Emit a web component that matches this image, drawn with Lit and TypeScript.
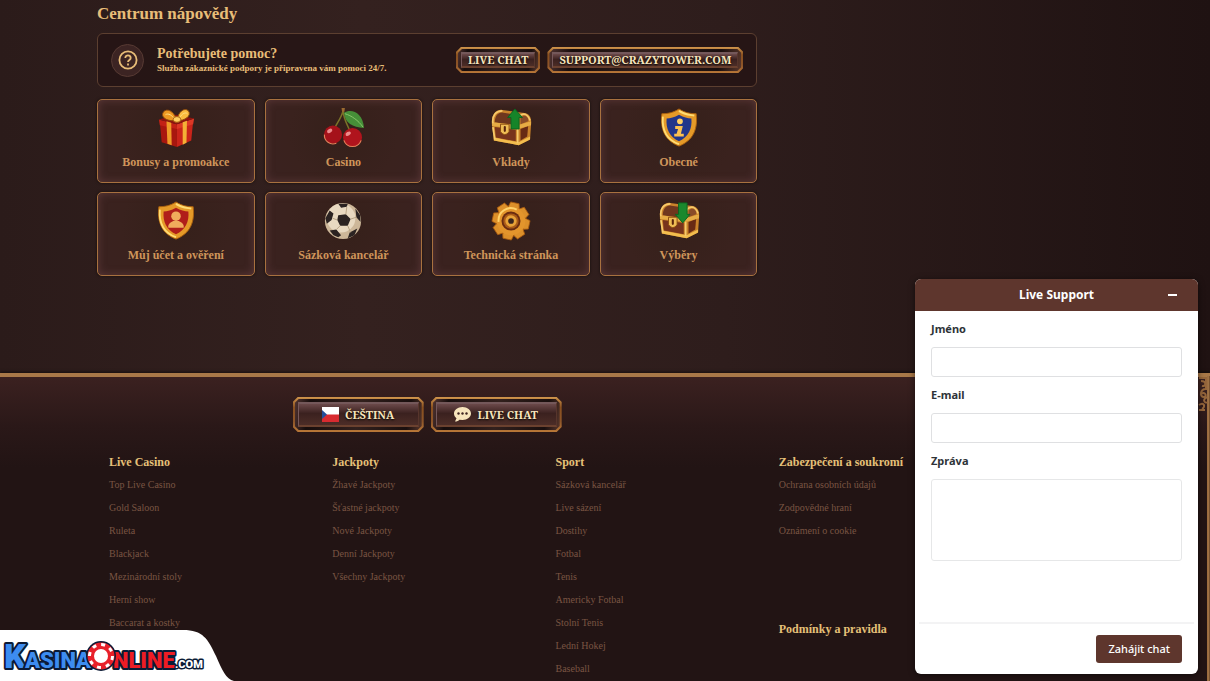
import { LitElement, html, css, svg } from "lit";
import { customElement } from "lit/decorators.js";

const gift = svg`
  <path d="M4 15 L22 20 L22 41 L6 36Z" fill="#a8170f"/><path d="M22 20 L39 14 L37 34 L22 41Z" fill="#c9241a"/>
  <path d="M3 12 L22 17 L22 22 L4 18Z" fill="#c32216"/><path d="M22 17 L40 11 L39 17 L22 22Z" fill="#dc3826"/>
  <path d="M3 12 L21 7 L40 11 L22 17Z" fill="#8f140e"/>
  <path d="M11 14 L16 15.500 L16.500 39 L12 37.500Z" fill="#ee9a28"/><path d="M28 15 L32.500 13.500 L32 36.500 L28 38.500Z" fill="#f4b036"/>
  <path d="M22 13 C10 15 3 8 9 3 C14 0 20 6 22 13Z" fill="#ee9a22" stroke="#8e4a0c"/>
  <path d="M22 13 C23 4 30 -1 34 3 C38 8 30 14 22 13Z" fill="#f9bb3e" stroke="#8e4a0c"/>
  <path d="M10 7 C13 5 17 8 19 11 M25 10 C27 6 31 4 33 6" stroke="#ffdf85" fill="none"/>
  <ellipse cx="22" cy="12" rx="4" ry="3" fill="#ffd061" stroke="#a35c10"/>`;
const cherry = svg`
  <path d="M21 3 C19 12 13 17 11 24 M21 3 C22 13 26 18 29 26" fill="none" stroke="#7c7328" stroke-width="1.600"/>
  <path d="M19.500 0 L23 0 L22.500 4 L20 4Z" fill="#9b6a30"/>
  <path d="M22 5 C30 0 42 5 43 21 C31 20 23 16 22 5Z" fill="#468f38"/><path d="M23 6 C30 8 37 13 42 20" stroke="#8cc76d" fill="none"/>
  <circle cx="10.500" cy="28" r="9.500" fill="#a5121a"/><circle cx="31" cy="31" r="10" fill="#b0141d"/>
  <path d="M1.500 28 A9 9 0 0 0 14 37 M22 34 A9.500 9.500 0 0 0 40 34" stroke="#e0825a" stroke-width="1.200" fill="none"/>
  <ellipse cx="7" cy="24" rx="3" ry="2" fill="#ec8b8c" transform="rotate(-30 7 24)"/><ellipse cx="26.500" cy="27" rx="3" ry="2" fill="#ec8b8c" transform="rotate(-30 26.500 27)"/>`;
const chest = svg`
  <path d="M1 17 C0 6 6 1 12 2 L33 5 C41 5 43 11 42 18 L41 33 L29 39 L3 34Z" fill="#c9822a"/>
  <path d="M4 15 C4 8 8 4 13 5 L28 7 C25 10 25 14 25 18Z" fill="#6f371e"/>
  <path d="M31 10 C35 6 40 9 39 14 L31 17Z" fill="#8a4c28"/>
  <path d="M4 20 L26 23 L26 35 L5 31Z" fill="#78341c"/><path d="M31 22 L39 19 L38 30 L31 34Z" fill="#682a14"/>
  <path d="M1 15 L28 18 L42 14 L42 18 L28 22 L1 19Z" fill="#e6ac45"/>
  <path d="M3 31 L29 36 L41 30 L41 33 L29 39 L3 34Z" fill="#f2bd4e"/>
  <path d="M2 16 C1 8 5 3 12 3 M28 16 C27 5 38 3 41 13 M2 20 L4 33 M28 22 V37" fill="none" stroke="#f6ca6c" stroke-width="1.800"/>
  <path d="M10 17 h9 v8 q-4.500 6 -9 0Z" fill="#f0bd55" stroke="#8a4b10"/><path d="M14.500 20 v4" stroke="#5a250c" stroke-width="2.200" stroke-linecap="round"/>`;
const deposit = svg`${chest}<path d="M25 1 L33 10 H29.500 V22 H21 V10 H17.500Z" fill="#158429" stroke="#0d6420"/>`;
const withdraw = svg`${chest}<path d="M20.500 2 H29.500 V14 H32.500 L25 23 L17 14 H20.500Z" fill="#1a882d" stroke="#0d6420"/>`;
const shieldBody = (fill: string) => svg`
  <path d="M21 1 C27 5 33 6 39 6 C41 22 36 34 21 40 C6 34 1 22 3 6 C9 6 15 5 21 1Z" fill="#e59a28" stroke="#a9600f"/>
  <path d="M21 3 C27 7 32 7 37 8 M4 9 C3 22 7 33 21 38" fill="none" stroke="#ffdd74" stroke-width="2"/>
  <path d="M21 7 C26 10 30 10.500 34 11 C35 22 31 30 21 35 C11 30 7 22 8 11 C12 10.500 16 10 21 7Z" fill="${fill}"/>`;
const info = svg`${shieldBody("#22368a")}<circle cx="22" cy="14" r="3" fill="#ffcf62"/><path d="M17 19 H25 L23 27 H26 V30 H16 V27 H18.500 L20 22 H17Z" fill="#fbc050"/>`;
const account = svg`${shieldBody("#b01e1a")}<circle cx="21" cy="16" r="5" fill="#f0ab5c"/><path d="M13 28 C12 24 16 22 18 21 H24 C26 22 30 24 29 28Z" fill="#f0ab5c"/>`;
const ball = svg`
  <circle cx="21" cy="21" r="19" fill="#cdb799"/><circle cx="19" cy="18" r="15" fill="#e8d9c1"/>
  <path d="M16 15 L24 14 L29 19 L26 26 L18 26 L15 20Z M2.500 18 L7 10 L11 13 L9 20 L4 24Z M16 3 L26 3 L25 6 L19 7Z M34 8 L39 15 L39.500 22 L35 17Z M7 31 L14 30 L19 36 L16 38 L11 36Z M28 33 L36 29 L33 36 L26 39Z" fill="#2b2322"/>
  <path d="M15 20 L10 18 M24 14 L25 6 M29 19 L35 17 M26 26 L29 33 M18 26 L14 30" stroke="#b5a184"/>`;
const teeth = [0, 45, 90, 135, 180, 225, 270, 315];
const gear = svg`
  ${teeth.map((a) => svg`<path d="M14.500 9 L16.500 1.500 H25.500 L27.500 9Z" fill="#dc902a" stroke="#a85a10" stroke-width=".8" transform="rotate(${a + 12} 21 21)"/>`)}
  <circle cx="21" cy="21" r="15" fill="#e3952c"/><path d="M8 22 A13 13 0 0 1 27 9" stroke="#ffd26a" stroke-width="2" fill="none"/>
  <circle cx="21" cy="21" r="10" fill="#6b2c10"/><circle cx="21" cy="21" r="8" fill="#a95a18"/><circle cx="21" cy="21" r="6" fill="#e8a238"/><circle cx="21" cy="21" r="3" fill="#38241e"/>`;

const topics = [
  { label: "Bonusy a promoakce", icon: gift },
  { label: "Casino", icon: cherry },
  { label: "Vklady", icon: deposit },
  { label: "Obecné", icon: info },
  { label: "Můj účet a ověření", icon: account },
  { label: "Sázková kancelář", icon: ball },
  { label: "Technická stránka", icon: gear },
  { label: "Výběry", icon: withdraw },
];

const columns = [
  [{ title: "Live Casino", links: ["Top Live Casino", "Gold Saloon", "Ruleta", "Blackjack", "Mezinárodní stoly", "Herní show", "Baccarat a kostky"] }],
  [{ title: "Jackpoty", links: ["Žhavé Jackpoty", "Šťastné jackpoty", "Nové Jackpoty", "Denní Jackpoty", "Všechny Jackpoty"] }],
  [{ title: "Sport", links: ["Sázková kancelář", "Live sázení", "Dostihy", "Fotbal", "Tenis", "Americky Fotbal", "Stolní Tenis", "Lední Hokej", "Baseball"] }],
  [
    { title: "Zabezpečení a soukromí", links: ["Ochrana osobních údajů", "Zodpovědné hraní", "Oznámení o cookie"] },
    { title: "Podmínky a pravidla", links: [] as string[] },
  ],
];

@customElement("framed-button")
class FramedButton extends LitElement {
  static properties = { large: { type: Boolean, reflect: true } };
  static styles = css`
    :host { display: block; }
    .rim {
      display: block; padding: 2px; border: 0; cursor: pointer;
      background: linear-gradient(#d0954c, #89501f 30%, #8d5529 70%, #b97838);
      clip-path: polygon(5px 0, calc(100% - 5px) 0, 100% 5px, 100% calc(100% - 5px), calc(100% - 5px) 100%, 5px 100%, 0 calc(100% - 5px), 0 5px);
    }
    .well {
      display: block; padding: 3px; background: linear-gradient(100deg, #513431, #170d0c 12%, #32201d 50%, #1a0f0e 88%, #59372c);
      clip-path: polygon(4px 0, calc(100% - 4px) 0, 100% 4px, 100% calc(100% - 4px), calc(100% - 4px) 100%, 4px 100%, 0 calc(100% - 4px), 0 4px);
    }
    .face {
      display: flex; align-items: center; justify-content: center; gap: 6px;
      height: 16px; padding: 0 6px; box-sizing: border-box;
      border-top: 2px solid #74585a; border-left: 1px solid #76585a; border-bottom: 2px solid #6b412f; border-right: 1px solid #57352c;
      background: linear-gradient(#6b494a, #3b211f 45%, #4c2d27);
      color: #f7e5bd; font: 700 11px/12px "Noto Serif", "DejaVu Serif Condensed", "DejaVu Serif", serif;
      text-shadow: 0 1px 2px #000; white-space: nowrap; text-transform: uppercase;
    }
    :host([large]) .face { width: 121px; height: 25px; }
  `;
  render() {
    return html`<button class="rim"><span class="well"><span class="face"><slot></slot></span></span></button>`;
  }
}

@customElement("live-support")
class LiveSupport extends LitElement {
  static styles = css`
    :host { display: block; }
    .panel {
      display: flex; flex-direction: column; height: 395px; overflow: hidden;
      background: #fff; border-radius: 6px; color: #2e3338;
      font: 700 11px/16px "Noto Sans", sans-serif; box-shadow: 0 1px 6px #0008;
    }
    .bar { display: grid; grid-template-columns: 30px 1fr 30px; align-items: center; height: 32px; flex: none; background: #5e362d; color: #fff; }
    .title { grid-column: 2; margin: 0; font-size: 12px; line-height: 18px; text-align: center; }
    .minimise { display: grid; place-items: center start; height: 32px; padding: 0; border: 0; background: none; }
    .form { display: flex; flex-direction: column; flex: 1; padding: 10px 16px 0; }
    .field { display: block; width: 100%; height: 30px; margin: 10px 0; box-sizing: border-box; border: 1px solid #dfe0e2; border-radius: 3px; background: #fff; resize: none; font: inherit; }
    .message { height: 82px; border-color: #e6e7e8; }
    .actions { display: flex; justify-content: flex-end; margin: 0 4px; padding: 11px 12px 11px; border-top: 2px solid #f3f3f4; }
    .send { height: 28px; padding: 0 12px; border: 0; border-radius: 3px; background: #5e362d; color: #fff; font: 500 11px/16px "Noto Sans", sans-serif; }
  `;
  render() {
    return html`<section class="panel">
      <header class="bar">
        <h2 class="title">Live Support</h2>
        <button class="minimise" aria-label="Minimalizovat"><svg width="9" height="2"><rect width="9" height="2" fill="#fff"/></svg></button>
      </header>
      <form class="form">
        <label for="name">Jméno</label><input class="field" id="name" />
        <label for="email">E-mail</label><input class="field" id="email" type="email" />
        <label for="message">Zpráva</label><textarea class="field message" id="message"></textarea>
      </form>
      <footer class="actions"><button class="send">Zahájit chat</button></footer>
    </section>`;
  }
}

@customElement("app-root")
class AppRoot extends LitElement {
  static styles = css`
    :host {
      display: flex; flex-direction: column; position: relative; height: 100vh; overflow: hidden;
      color: #e8bd78; font-family: "Liberation Serif", serif;
      background: linear-gradient(90deg, #2b1b1a, #34211f 30%, #2e1d1c 60%, #1f1212);
    }
    .wrap { width: 84%; max-width: 1016px; margin: 0 auto; }
    .main { flex: none; min-height: 373px; }
    .help { width: 65%; min-width: 640px; }
    .heading { margin: 0; padding: 4px 0 9px; font: 700 17px/20px "Liberation Serif", serif; }
    .contact { display: flex; align-items: center; gap: 7px; height: 54px; box-sizing: border-box; padding: 0 13px; border: 1px solid #5c3f30; border-radius: 6px; background: #241414cc; }
    .question { display: grid; place-items: center; width: 33px; height: 33px; margin-right: 6px; border-radius: 50%; background: #3c2423; box-sizing: border-box; border: 1px solid #573a33; }
    .copy { flex: 1; }
    .ask { margin: 0; font-size: 14px; line-height: 16px; }
    .note { margin: 0; font: 700 9px/13px "Liberation Serif", serif; }
    .topics { display: grid; grid-template-columns: repeat(4, 1fr); gap: 9px 10px; margin-top: 12px; }
    .topic {
      display: flex; flex-direction: column; align-items: center; gap: 5px; height: 84px; padding: 8px 0 0; box-sizing: border-box;
      border: 1px solid #a8713f; border-radius: 5px; color: #cf955a; text-decoration: none; font-size: 12px; font-weight: 700; line-height: 18px;
      background: radial-gradient(circle at 50% 40%, #35201a, #3a221e 60%, #3a2220); box-shadow: inset 0 0 8px #75474a99, 0 0 3px #0009;
    }
    .footer { flex: 1; border-top: 4px solid #a87848; box-shadow: 0 -1px 3px #0008; background: linear-gradient(#3b2120, #2a1818 50px, #221414 90px); }
    .switches { display: flex; justify-content: center; gap: 7px; width: 65%; padding: 20px 0 22px; }
    .columns { display: grid; grid-template-columns: repeat(4, 22%); column-gap: 5px; padding: 0 12px; }
    .column { display: flex; flex-direction: column; gap: 78px; }
    .label { margin: 0 0 4px; font-size: 12px; line-height: 16px; color: #e5c078; white-space: nowrap; }
    .links { margin: 0; padding: 0; list-style: none; }
    .item { height: 23px; font-size: 10px; line-height: 22px; }
    .link { color: #7a5543; text-decoration: none; }
    .edge { position: absolute; right: 0; bottom: 0; display: block; width: 12px; height: calc(100% - 376px); background: linear-gradient(90deg, transparent 9px, #85572f 9px, #b28250 10px, #654226); }
    .chat { position: absolute; right: 12px; bottom: 7px; width: 283px; }
    .brand { position: absolute; left: 0; bottom: 0; display: block; }
    .plate { display: block; }
    .first { font: 900 34px Roboto, sans-serif; }
    .second { font: 900 22px Roboto, sans-serif; }
    .tld { font: 900 11px Roboto, sans-serif; }
  `;
  render() {
    return html`
      <main class="main"><div class="wrap"><div class="help">
        <h1 class="heading">Centrum nápovědy</h1>
        <section class="contact">
          <span class="question"><svg width="20" height="20" viewBox="0 0 20 20" fill="none" stroke="#e8bd78" stroke-width="1.800"><circle cx="10" cy="10" r="8.600"/><path d="M7.300 8 C7.300 4.500 12.700 4.700 12.700 8 C12.700 10 10 9.800 10 12"/><path d="M10 13.500 V15.400"/></svg></span>
          <div class="copy"><h2 class="ask">Potřebujete pomoc?</h2><p class="note">Služba zákaznické podpory je připravena vám pomoci 24/7.</p></div>
          <framed-button>Live chat</framed-button>
          <framed-button>support@crazytower.com</framed-button>
        </section>
        <nav class="topics">
          ${topics.map((t) => html`<a class="topic" href="#"><svg width="42" height="40" viewBox="0 0 42 42">${t.icon}</svg><span>${t.label}</span></a>`)}
        </nav>
      </div></div></main>
      <footer class="footer"><div class="wrap">
        <div class="switches">
          <framed-button large><svg width="17" height="15" viewBox="0 0 17 15"><path fill="#fff" d="M0 0h17v8H0z"/><path fill="#d82b30" d="M0 7.500h17V15H0z"/><path fill="#244e99" d="M0 3L5 7.500 0 12z"/></svg><span>Čeština</span></framed-button>
          <framed-button large><svg width="17" height="15" viewBox="0 0 17 15"><path fill="#f7e5bd" d="M8.500 0C3.500 0 0 3 0 6.500c0 2 1 3.500 2.500 4.700L1 14.500c2 0 3.500-.7 4.500-1.800l3 .3c5 0 8.500-3 8.500-6.500S13.500 0 8.500 0z"/><g fill="#3d2421"><circle cx="4.500" cy="6.500" r="1.200"/><circle cx="8.500" cy="6.500" r="1.200"/><circle cx="12.500" cy="6.500" r="1.200"/></g></svg><span>Live chat</span></framed-button>
        </div>
        <nav class="columns">
          ${columns.map((groups) => html`<div class="column">${groups.map((g) => html`<section><h3 class="label">${g.title}</h3><ul class="links">${g.links.map((l) => html`<li class="item"><a class="link" href="#">${l}</a></li>`)}</ul></section>`)}</div>`)}
        </nav>
      </div></footer>
      <span class="edge"><svg width="12" height="36" viewBox="0 0 12 36" fill="none" stroke="#94653b" stroke-width="2"><path d="M1 2H8V14M3 5C9 5 8 11 4 10M9 13C2 12 1 21 6 21C10 20 6 15 4 18M9 21C3 24 8 28 9 26M1 29C6 25 8 31 4 33M1 34H7"/></svg></span>
      <a class="brand" href="#" aria-label="KasinaOnline.com"><svg class="plate" width="234" height="51" viewBox="0 0 234 51">
        <path d="M0 0H183C203 0 208 9 216 26C222 40 226 49 234 51H0Z" fill="#fff"/>
        <g stroke="#0b1b36" stroke-width="4" stroke-linejoin="round" paint-order="stroke">
          <text class="first" x="4" y="38" fill="#3d8cf0">K</text><text class="second" x="25" y="38" fill="#3d8cf0">ASINA</text>
          <text class="second" x="113" y="38" fill="#ee1c24">NLINE</text><text class="tld" x="175" y="38" fill="#fff" stroke-width="3">.COM</text>
        </g>
        <circle cx="101" cy="26" r="15" fill="#0b1b36"/><circle cx="101" cy="26" r="13.500" fill="#e8202a"/>
        <circle cx="101" cy="26" r="11.500" fill="none" stroke="#fff" stroke-width="3" stroke-dasharray="4 5"/><circle cx="101" cy="26" r="7" fill="#fff"/>
      </svg></a>
      <live-support class="chat"></live-support>`;
  }
}
